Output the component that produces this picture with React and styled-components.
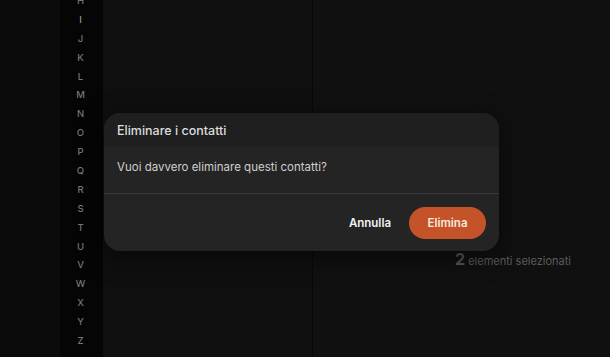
import React from 'react'
import styled, { createGlobalStyle } from 'styled-components'

const GlobalStyle = createGlobalStyle`
  html, body {
    margin: 0;
    padding: 0;
    background: #0b0b0b;
    overflow: hidden;
  }
  body {
    font-family: Inter, "Noto Sans", "Liberation Sans", sans-serif;
    -webkit-font-smoothing: antialiased;
  }
`

const letters = 'HIJKLMNOPQRSTUVWXYZ'.split('')

const Page = styled.div`
  position: relative;
  width: 610px;
  height: 357px;
  display: grid;
  grid-template-columns: 60px 43px 210px 1fr;
  overflow: hidden;
`

const Gutter = styled.div`
  background: #0a0a0a;
`

const IndexBar = styled.div`
  background: #050505;
  display: flex;
  flex-direction: column;
  align-items: center;
  margin-top: -8px;
  padding-right: 2px;
`

const Letter = styled.span`
  height: 18.9px;
  line-height: 18.9px;
  font-size: 9.5px;
  font-weight: 500;
  color: ${p => (p.$active ? '#9a9a9a' : '#767676')};
`

const ListPane = styled.div`
  background: #0f0f0f;
  border-right: 1px solid #080808;
`

const DetailPane = styled.div`
  background: #101010;
  display: flex;
  justify-content: flex-end;
  align-items: flex-start;
  padding: 249px 39px 0 0;
`

const Selection = styled.div`
  display: flex;
  align-items: baseline;
  gap: 3px;
  color: #5c5c5c;
  font-size: 11px;
`

const Count = styled.span`
  font-size: 16px;
  font-weight: 700;
  color: #555;
`

const Dialog = styled.div`
  position: absolute;
  left: 104px;
  top: 113px;
  width: 395px;
  border-radius: 16px;
  overflow: hidden;
  background: #242424;
  box-shadow: 0 6px 24px rgba(0, 0, 0, 0.5);
`

const Header = styled.div`
  height: 34px;
  display: flex;
  align-items: center;
  padding: 0 13px;
  background: #1f1f1f;
  color: #dcdcdc;
  font-size: 12.5px;
  font-weight: 500;
`

const Body = styled.div`
  height: 47px;
  display: flex;
  align-items: center;
  padding: 0 13px 6px;
  box-sizing: border-box;
  color: #cfcfcf;
  font-size: 11.5px;
  border-bottom: 1px solid #393939;
`

const Footer = styled.div`
  height: 57px;
  display: flex;
  justify-content: flex-end;
  align-items: center;
  gap: 18px;
  padding: 0 13px 0 0;
`

const TextButton = styled.button`
  background: none;
  border: none;
  padding: 0;
  font-family: inherit;
  font-size: 11.5px;
  font-weight: 600;
  color: #f2f2f2;
`

const DangerButton = styled.button`
  width: 77px;
  height: 32px;
  border: none;
  border-radius: 16px;
  background: #c5532a;
  font-family: inherit;
  font-size: 11.5px;
  font-weight: 600;
  color: #f7e8de;
`

export default function App() {
  return (
    <>
      <GlobalStyle />
      <Page>
        <Gutter />
        <IndexBar>
          {letters.map(l => (
            <Letter key={l} $active={l === 'I'}>{l}</Letter>
          ))}
        </IndexBar>
        <ListPane />
        <DetailPane>
          <Selection>
            <Count>2</Count>
            <span>elementi selezionati</span>
          </Selection>
        </DetailPane>
        <Dialog>
          <Header>Eliminare i contatti</Header>
          <Body>Vuoi davvero eliminare questi contatti?</Body>
          <Footer>
            <TextButton>Annulla</TextButton>
            <DangerButton>Elimina</DangerButton>
          </Footer>
        </Dialog>
      </Page>
    </>
  )
}
